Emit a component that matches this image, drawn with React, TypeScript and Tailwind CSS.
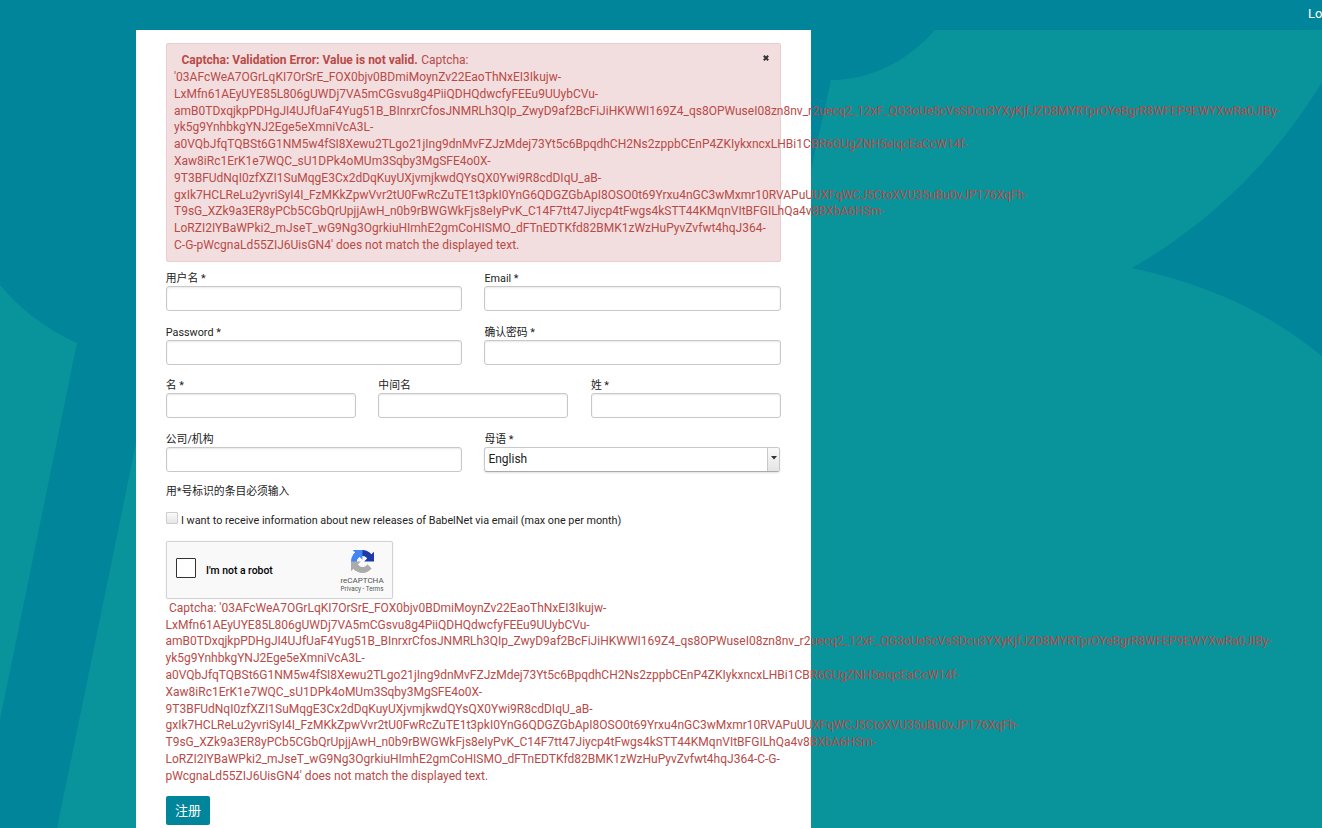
import { clsx } from 'clsx'

interface FieldProps {
  label: string
  type?: string
}

// the token is broken after its hyphens only, so some lines run out of the panel
const TOKEN_LINES = [
  'LxMfn61AEyUYE85L806gUWDj7VA5mCGsvu8g4PiiQDHQdwcfyFEEu9UUybCVu-',
  'amB0TDxqjkpPDHgJI4UJfUaF4Yug51B_BInrxrCfosJNMRLh3QIp_ZwyD9af2BcFiJiHKWWI169Z4_qs8OPWuseI08zn8nv_r2uecq2_12xF_QG3oUe5cVsSDcu3YXyKjfJZD8MYRTprOYeBgrR8WFEP9EWYXwRa0JIBy-',
  'yk5g9YnhbkgYNJ2Ege5eXmniVcA3L-',
  'a0VQbJfqTQBSt6G1NM5w4fSI8Xewu2TLgo21jIng9dnMvFZJzMdej73Yt5c6BpqdhCH2Ns2zppbCEnP4ZKIykxncxLHBi1CBR6GUgZNH5eiqcEaCcW14f-',
  'Xaw8iRc1ErK1e7WQC_sU1DPk4oMUm3Sqby3MgSFE4o0X-',
  '9T3BFUdNqI0zfXZI1SuMqgE3Cx2dDqKuyUXjvmjkwdQYsQX0Ywi9R8cdDIqU_aB-',
  'gxIk7HCLReLu2yvriSyI4I_FzMKkZpwVvr2tU0FwRcZuTE1t3pkI0YnG6QDGZGbApI8OSO0t69Yrxu4nGC3wMxmr10RVAPuUUXFqWCJ5CtoXVU35uBu0vJP176XqFh-',
  'T9sG_XZk9a3ER8yPCb5CGbQrUpjjAwH_n0b9rBWGWkFjs8eIyPvK_C14F7tt47Jiycp4tFwgs4kSTT44KMqnVItBFGILhQa4v8BXbA6HSm-',
]

const FIRST_LINE = "'03AFcWeA7OGrLqKI7OrSrE_FOX0bjv0BDmiMoynZv22EaoThNxEI3Ikujw-"
const LAST_LINE = 'LoRZI2IYBaWPki2_mJseT_wG9Ng3OgrkiuHImhE2gmCoHISMO_dFTnEDTKfd82BMK1zWzHuPyvZvfwt4hqJ364-'

function Lines({ lines }: { lines: string[] }) {
  return (
    <>
      {lines.map((line) => (
        <div key={line}>{line}</div>
      ))}
    </>
  )
}

function Field({ label, type = 'text' }: FieldProps) {
  return (
    <label className="block flex-1 text-[10.8px] leading-[14px] text-[#222]">
      {label}
      <input
        type={type}
        className="block h-[25px] w-full rounded-[3px] border border-[#c8c8c8] bg-white px-1 shadow-[inset_0_1px_2px_#00000018] outline-none"
      />
    </label>
  )
}

function Row({ children, className }: { children: React.ReactNode; className?: string }) {
  return <div className={clsx('-ml-[0.2px] flex', className)}>{children}</div>
}

function Backdrop() {
  return (
    <svg className="absolute inset-0 -z-10 h-[828px] w-[1322px]" viewBox="0 0 1322 828">
      <rect width="1322" height="828" fill="#00859a" />
      <g fill="#09939a">
        <path d="M0 285C20 309 46 329 77 343L0 720Z" />
        <path d="M136 443L57 828H811V170L831 80C874 80 910 58 935 30H1322V82C1276 159 1209 224 1132 268C1206 284 1267 311 1322 356V828H136Z" />
      </g>
    </svg>
  )
}

function RecaptchaLogo() {
  return (
    <svg className="h-[23px] w-[23px]" viewBox="0 0 64 64">
      <path
        fill="#1c3aa9"
        d="M64 31.955a33 33 0 0 0-.03-1.37V4.687l-7.16 7.16C50.95 4.674 42.033.093 32.046.093c-10.393 0-19.626 4.96-25.467 12.642l11.736 11.86a15.55 15.55 0 0 1 4.754-5.334c2.05-1.6 4.952-2.906 8.968-2.906.485 0 .86.057 1.135.163 4.976.393 9.288 3.14 11.828 7.124l-8.307 8.307 27.307-.031"
      />
      <path
        fill="#4285f4"
        d="M31.862.094a32 32 0 0 0-1.37.03H4.594l7.16 7.16C4.58 13.147 0 22.06 0 32.046c0 10.393 4.96 19.626 12.642 25.467l11.86-11.736a15.55 15.55 0 0 1-5.334-4.754c-1.6-2.05-2.906-4.952-2.906-8.968 0-.485.057-.86.163-1.135.393-4.976 3.14-9.288 7.124-11.828l8.307 8.307-.03-27.307"
      />
      <path
        fill="#ababab"
        d="M.001 32.045a33 33 0 0 0 .03 1.37v25.898l7.16-7.16c5.86 7.173 14.774 11.754 24.76 11.754 10.393 0 19.626-4.96 25.467-12.642l-11.736-11.86a15.55 15.55 0 0 1-4.754 5.334c-2.05 1.6-4.952 2.906-8.968 2.906-.485 0-.86-.057-1.135-.163-4.976-.393-9.288-3.14-11.828-7.124l8.307-8.307-27.303.03"
      />
    </svg>
  )
}

function Recaptcha() {
  return (
    <div className="flex h-[58px] w-[227px] items-center rounded-[2px] border border-[#d3d3d3] bg-[#f9f9f9] pl-[9px] shadow-[0_0_2px_#00000014]">
      <div className="mb-[5px] h-5 w-5 rounded-[1px] border border-[#333] bg-white" />
      <span className="ml-[10px] pt-[2px] text-[10.4px] font-medium text-black">I'm not a robot</span>
      <div className="mr-[6px] ml-auto flex w-[48px] flex-col items-center pt-[3px] text-[#555]">
        <RecaptchaLogo />
        <span className="mt-[3px] text-[8px] leading-[9px]">reCAPTCHA</span>
        <span className="text-[6.3px] leading-[8px]">Privacy - Terms</span>
      </div>
    </div>
  )
}

export default function App() {
  return (
    <div className="relative isolate h-[828px] w-[1322px] overflow-hidden font-[Roboto,'Noto_Sans_CJK_SC',sans-serif] text-xs text-[#222]">
      <Backdrop />
      <header className="flex h-[30px] items-center justify-end overflow-hidden">
        <div className="w-[14px] pb-[3px] text-[13px] whitespace-nowrap text-white">Log in</div>
      </header>

      <main className="ml-[136px] h-[798px] w-[675px] bg-white px-[30px] pt-[13px]">
        <div className="relative h-[219px] rounded-[2px] border border-[#ebccd1] bg-[#f2dede] px-[7px] pt-[8.2px] leading-[16.8px] whitespace-nowrap text-[#b94a48]">
          <svg className="absolute top-[11px] right-[11px] h-[6px] w-[6px]" viewBox="0 0 6 6">
            <path d="M.8.8l4.4 4.4M5.2.8L.8 5.2" stroke="#333" strokeWidth="2" />
          </svg>
          <div>
            <strong className="mr-[0.5px] ml-[7.5px] font-bold">Captcha: Validation Error: Value is not valid.</strong> Captcha:
          </div>
          <Lines
            lines={[FIRST_LINE, ...TOKEN_LINES, LAST_LINE, "C-G-pWcgnaLd55ZIJ6UisGN4' does not match the displayed text."]}
          />
        </div>

        <form>
          <Row className="mt-[10px] gap-[22px]">
            <Field label="用户名 *" />
            <Field label="Email *" />
          </Row>
          <Row className="mt-[15px] gap-[22px]">
            <Field label="Password *" type="password" />
            <Field label="确认密码 *" type="password" />
          </Row>
          <Row className="mt-[14px] gap-[22.4px]">
            <Field label="名 *" />
            <Field label="中间名" />
            <Field label="姓 *" />
          </Row>
          <Row className="mt-[15px] gap-[22px]">
            <Field label="公司/机构" />
            <div className="flex-1 text-[10.8px] leading-[14px]">
              母语 *
              <div className="mr-px flex h-[25px] items-stretch overflow-hidden rounded-[3px] border border-[#c8c8c8] border-b-[#aaa] bg-white shadow-[0_1px_2px_#00000020]">
                <span className="flex-1 pl-[3px] text-[12px] leading-[22px]">English</span>
                <span className="flex w-[12px] justify-center border-l border-[#c8c8c8] bg-linear-to-b from-[#fafafa] to-[#e4e4e4] pt-[8px]">
                  <svg className="h-[4px] w-[6px]" viewBox="0 0 6 4">
                    <path d="M0 0h6L3 3.5z" fill="#333" />
                  </svg>
                </span>
              </div>
            </div>
          </Row>

          <p className="mt-[11px] text-[10.8px] leading-[17px]">用*号标识的条目必须输入</p>
          <div className="mt-[12px] flex h-[17px] text-[10.8px] leading-[17px]">
            <span className="mr-[3px] h-3 w-3 rounded-[1px] border border-[#ccc] bg-linear-to-b from-[#fafafa] to-[#e6e6e6]" />
            I want to receive information about new releases of BabelNet via email (max one per month)
          </div>
          <div className="mt-[12px]">
            <Recaptcha />
          </div>
          <div className="-ml-[0.5px] pt-[0.8px] leading-[16.8px] whitespace-nowrap text-[#b94a48]">
            <div className="pl-[3.5px]">Captcha: {FIRST_LINE}</div>
            <Lines lines={[...TOKEN_LINES, LAST_LINE + 'C-G-', "pWcgnaLd55ZIJ6UisGN4' does not match the displayed text."]} />
          </div>
          <button type="button" className="mt-[11.4px] h-[29px] w-[44px] rounded-[2px] bg-[#00859a] text-[13px] text-white">
            注册
          </button>
        </form>
      </main>
    </div>
  )
}
